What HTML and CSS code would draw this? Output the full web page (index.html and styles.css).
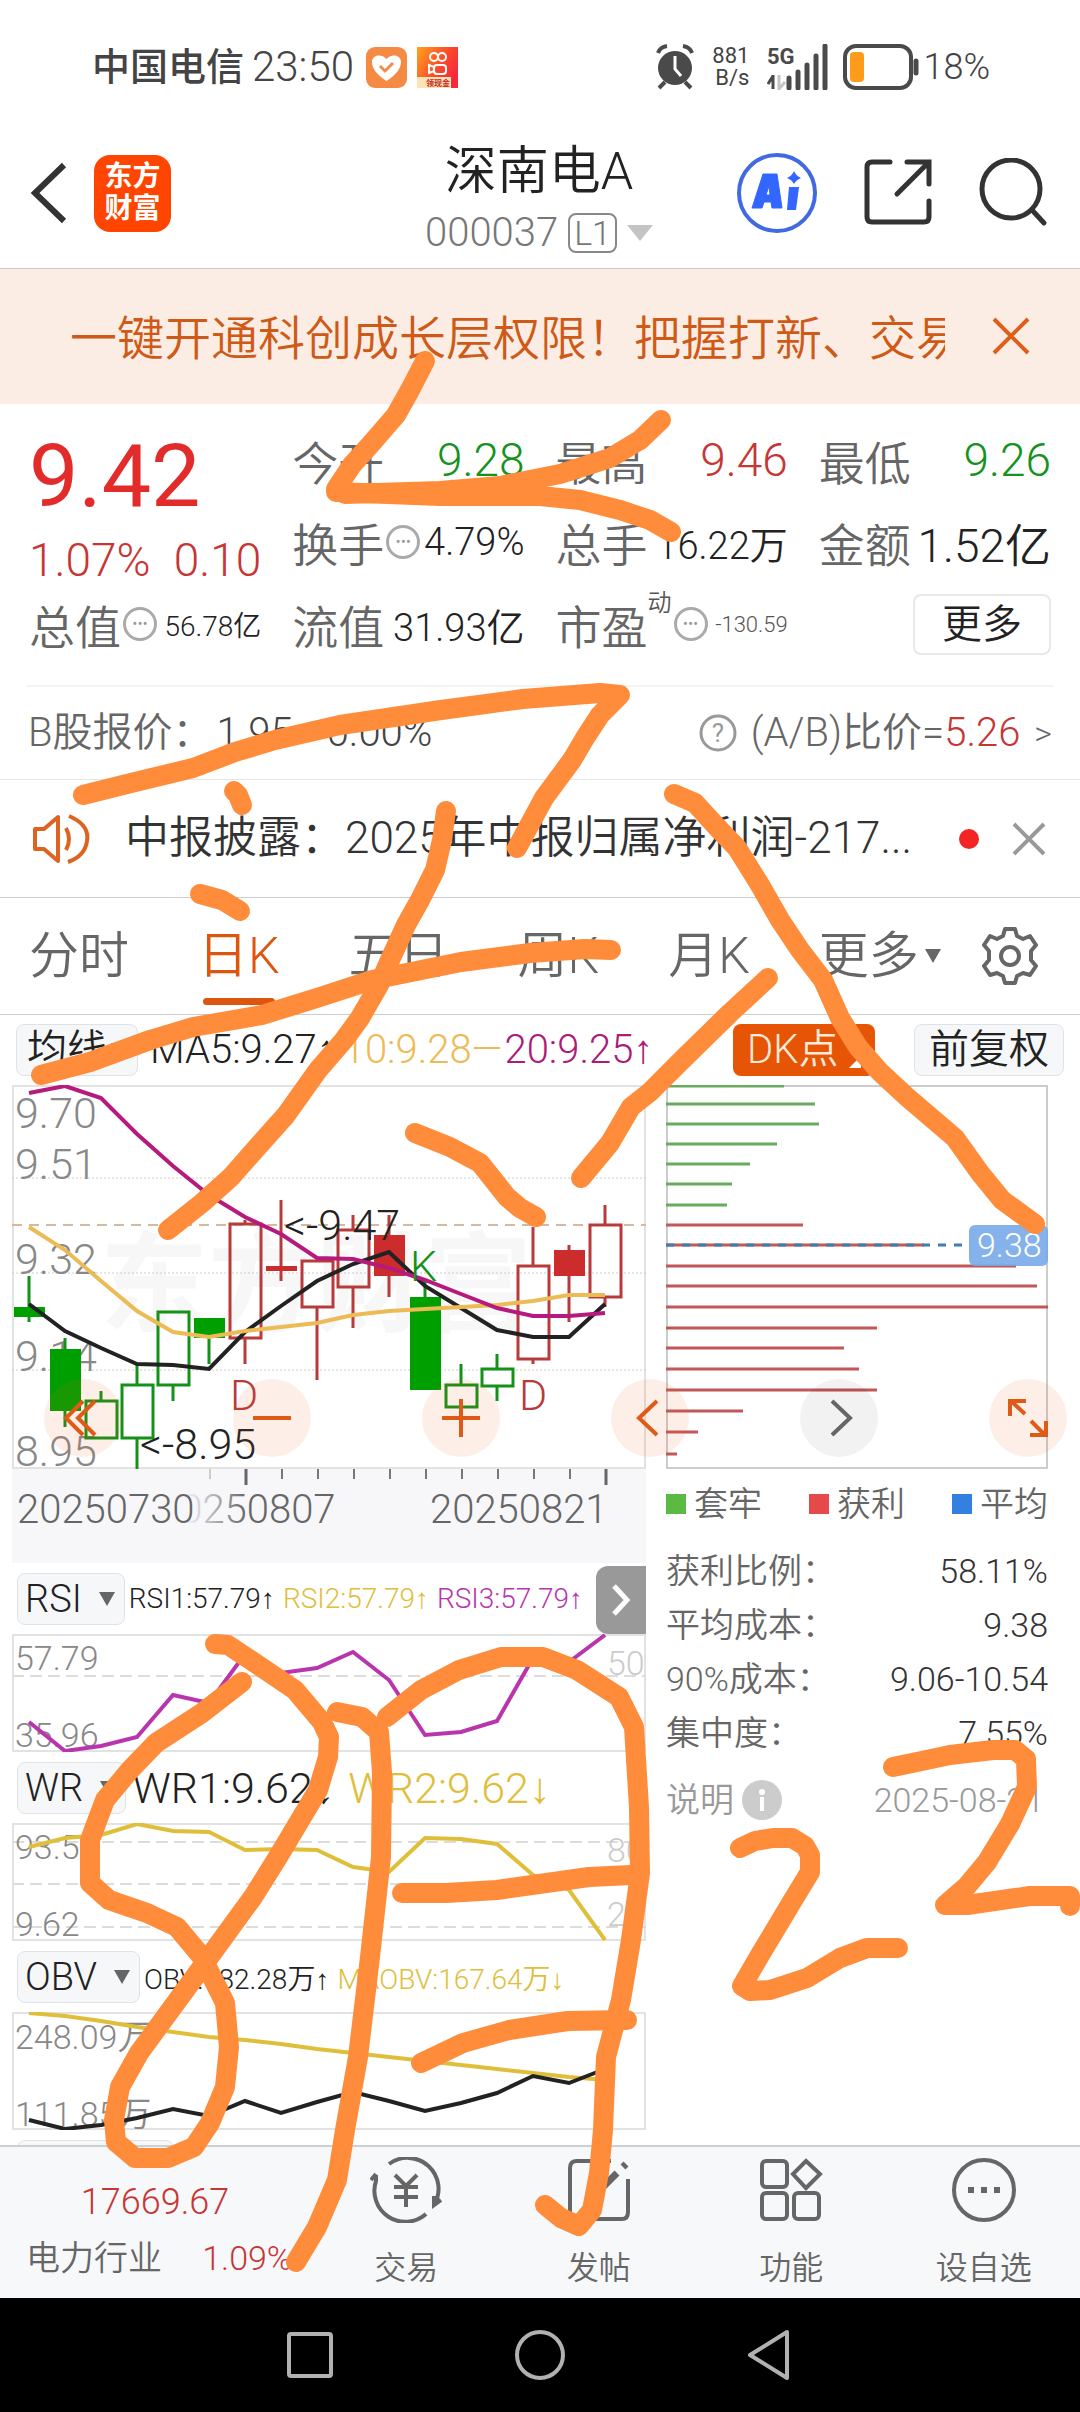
FILE: index.html
```html
<!DOCTYPE html>
<html lang="zh-CN">
<head>
    <meta charset="UTF-8">
    <meta name="viewport" content="width=device-width, initial-scale=1.0">
    <title>深南电A 000037</title>
    <link rel="stylesheet" href="styles.css">
</head>
<body>
    <div class="phone">
        <div class="status-bar">
            <div class="status-left">
                <span class="carrier">中国电信</span>
                <span class="clock">23:50</span>
                <svg class="app-badge" viewBox="0 0 41 41">
                    <rect width="41" height="41" rx="9" fill="#f58a45"/>
                    <path d="M20.500 34 C10 27 6 21 6 15 C6 8 15 6 20.500 12 C26 6 35 8 35 15 C35 21 31 27 20.500 34Z" fill="#fff"/>
                    <path d="M14 19 l5 5 l8 -8" fill="none" stroke="#f58a45" stroke-width="3"/>
                </svg>
                <svg class="app-badge" viewBox="0 0 41 41">
                    <defs>
                        <linearGradient id="kwai" x1="0" y1="0" x2="1" y2="0.600">
                            <stop offset="0" stop-color="#ffa41c"/>
                            <stop offset="0.600" stop-color="#fb4a2c"/>
                            <stop offset="1" stop-color="#f5283c"/>
                        </linearGradient>
                    </defs>
                    <rect width="41" height="41" fill="url(#kwai)"/>
                    <g fill="none" stroke="#fff" stroke-width="2">
                        <circle cx="17" cy="10" r="4"/>
                        <circle cx="25" cy="10" r="4"/>
                        <rect x="17" y="18" width="12" height="9" rx="3"/>
                        <path d="M17 20 l-5 -2 v8 l5 -2"/>
                    </g>
                    <path d="M0 30 H34 V41 H0Z" fill="#ffe3b5"/>
                    <text x="9" y="39" font-size="8" font-weight="700" fill="#c3261b">领现金</text>
                </svg>
            </div>
            <div class="status-right">
                <svg class="alarm" viewBox="0 0 38 46">
                    <circle cx="19" cy="24" r="17" fill="#4a4a4a"/>
                    <path d="M19 12 V25 L25 32" fill="none" stroke="#fff" stroke-width="3"/>
                    <path d="M2 9 Q4 3 11 2 M36 9 Q34 3 27 2 M9 38 L3 44 M29 38 L35 44" fill="none" stroke="#4a4a4a" stroke-width="4"/>
                </svg>
                <div class="net-speed"><span>881</span><span>B/s</span></div>
                <svg class="signal" viewBox="0 0 64 46">
                    <text x="0" y="20" font-size="22" font-weight="700" fill="#4a4a4a">5G</text>
                    <path d="M6 31 V45 M1 40 L6 32" stroke="#4a4a4a" stroke-width="3" fill="none"/>
                    <path d="M12 31 V45 L18 38" stroke="#c4c4c4" stroke-width="3" fill="none"/>
                    <path d="M22 34 V44 M31 28 V44 M40 21 V44 M49 12 V44 M58 2 V44" stroke="#4a4a4a" stroke-width="5" stroke-linecap="round"/>
                </svg>
                <svg class="battery" viewBox="0 0 76 46">
                    <rect x="2" y="2" width="66" height="42" rx="11" fill="none" stroke="#4a4a4a" stroke-width="4"/>
                    <rect x="7" y="8" width="14" height="30" rx="4" fill="#ff9b1b"/>
                    <path d="M73 17 V29" stroke="#4a4a4a" stroke-width="5" stroke-linecap="round"/>
                </svg>
                <span class="percent">18%</span>
            </div>
        </div>

        <header class="header">
            <div class="header-left">
                <button class="icon-btn" aria-label="返回">
                    <svg width="38" height="64" viewBox="0 0 38 64"><path d="M34 4 L5 32 L34 60" fill="none" stroke="#333" stroke-width="6"/></svg>
                </button>
                <a class="logo" href="#"><span>东方</span><span>财富</span></a>
            </div>
            <div class="header-title">
                <h1>深南电A</h1>
                <div class="code-row">
                    <span>000037</span>
                    <span class="level">L1</span>
                    <svg width="26" height="16" viewBox="0 0 26 16"><path d="M0 0 H26 L13 16Z" fill="#c4c4c4"/></svg>
                </div>
            </div>
            <div class="header-right">
                <button class="icon-btn" aria-label="AI 助手">
                    <svg width="82" height="82" viewBox="0 0 82 82">
                        <circle cx="41" cy="41" r="38" fill="none" stroke="#4169e1" stroke-width="4"/>
                        <path d="M27 22 H41 L46 56 H36 L35 50 H28 L26 56 H16Z M33 34 L30 43 H34Z" fill="#3366ff" fill-rule="evenodd" stroke="#3366ff" stroke-width="1" stroke-linejoin="round"/>
                        <path d="M53 35 H63 L60 58 H51Z" fill="#3366ff"/>
                        <path d="M58 19 Q60 24 65 26 Q60 28 58 32 Q56 28 51 26 Q56 24 58 19Z" fill="#3366ff"/>
                    </svg>
                </button>
                <button class="icon-btn" aria-label="分享">
                    <svg width="68" height="68" viewBox="0 0 68 68">
                        <path d="M26 3 H8 Q3 3 3 8 V58 Q3 63 8 63 H60 Q65 63 65 58 V42 M43 3 H65 V25 M64 4 L33 35" fill="none" stroke="#333" stroke-width="5" stroke-linecap="round"/>
                    </svg>
                </button>
                <button class="icon-btn" aria-label="搜索">
                    <svg width="70" height="70" viewBox="0 0 70 70">
                        <circle cx="33" cy="31" r="29" fill="none" stroke="#333" stroke-width="5"/>
                        <path d="M54 52 L66 65" stroke="#333" stroke-width="5" stroke-linecap="round"/>
                    </svg>
                </button>
            </div>
        </header>

        <div class="banner">
            <p>一键开通科创成长层权限！把握打新、交易先机</p>
            <button class="icon-btn" aria-label="关闭">
                <svg width="38" height="38" viewBox="0 0 38 38"><path d="M2 2 L36 36 M36 2 L2 36" stroke="#dd5f1b" stroke-width="4"/></svg>
            </button>
        </div>

        <section class="quote">
            <div class="price-box">
                <div class="price">9.42</div>
                <div class="change"><span>1.07%</span><span>0.10</span></div>
            </div>
            <div class="cell"><span class="label">今开</span><span class="value down">9.28</span></div>
            <div class="cell"><span class="label">最高</span><span class="value up">9.46</span></div>
            <div class="cell"><span class="label">最低</span><span class="value down">9.26</span></div>
            <div class="cell"><span class="label">换手</span><span class="dots">•••</span><span class="value medium">4.79%</span></div>
            <div class="cell"><span class="label">总手</span><span class="value medium">16.22万</span></div>
            <div class="cell"><span class="label">金额</span><span class="value">1.52亿</span></div>
            <div class="cell"><span class="label">总值</span><span class="dots">•••</span><span class="value small">56.78亿</span></div>
            <div class="cell"><span class="label">流值</span><span class="value medium">31.93亿</span></div>
            <div class="cell"><span class="label">市盈</span><sup>动</sup><span class="dots">•••</span><span class="value tiny">-130.59</span></div>
            <div class="cell"><button class="more-btn">更多</button></div>
        </section>

        <div class="b-share">
            <span>B股报价：</span>
            <span class="b-price">1.95</span>
            <span class="b-rate">0.00%</span>
            <a class="ratio" href="#">
                <svg width="38" height="38" viewBox="0 0 38 38">
                    <circle cx="19" cy="19" r="17" fill="none" stroke="#999" stroke-width="3"/>
                    <text x="19" y="28" font-size="26" text-anchor="middle" font-weight="400" fill="#999">?</text>
                </svg>
                <span>(A/B)比价=<em>5.26</em></span>
                <span class="gt">&gt;</span>
            </a>
        </div>

        <div class="notice">
            <svg width="58" height="52" viewBox="0 0 58 52">
                <path d="M3 16 H12 L26 4 V48 L12 36 H3Z M34 15 Q40 26 34 37 M37 3 Q58 12 55 28 Q53 43 36 49" fill="none" stroke="#dd6420" stroke-width="4" stroke-linejoin="round"/>
            </svg>
            <a href="#">中报披露：2025年中报归属净利润-217...</a>
            <span class="dot"></span>
            <button class="icon-btn" aria-label="关闭">
                <svg width="34" height="34" viewBox="0 0 34 34"><path d="M2 2 L32 32 M32 2 L2 32" stroke="#999" stroke-width="4"/></svg>
            </button>
        </div>

        <nav class="tabs">
            <button>分时</button>
            <button class="active">日K</button>
            <button>五日</button>
            <button>周K</button>
            <button>月K</button>
            <button>更多<svg class="tab-caret" width="16" height="14" viewBox="0 0 16 14"><path d="M0 0 H16 L8 14Z" fill="#666"/></svg></button>
            <button class="settings" aria-label="设置">
                <svg width="60" height="60" viewBox="0 0 60 60" fill="none" stroke="#666" stroke-width="4" stroke-linejoin="round">
                    <path d="M25 3 H35 L37 10 L43 13 L50 10 L56 19 L51 25 V34 L56 40 L50 49 L43 47 L37 50 L35 57 H25 L23 50 L17 47 L10 49 L4 40 L9 34 V25 L4 19 L10 10 L17 13 L23 10Z"/>
                    <circle cx="30" cy="30" r="9"/>
                </svg>
            </button>
        </nav>

        <div class="toolbar">
            <button class="tag-btn">均线<svg width="16" height="14" viewBox="0 0 16 14"><path d="M0 0 H16 L8 14Z" fill="#666"/></svg></button>
            <span class="ma5">MA5:9.27↑</span>
            <span class="ma10">10:9.28—</span>
            <span class="ma20">20:9.25↑</span>
            <button class="dk-btn">DK点<svg width="16" height="40" viewBox="0 0 16 40"><path d="M14 26 V38 H2Z" fill="#fff"/></svg></button>
            <button class="tag-btn">前复权</button>
        </div>

        <main class="charts">
            <div class="chart-left">
                <svg class="plot" viewBox="0 0 634 384">
                    <text class="watermark" x="88" y="238">东方财富</text>
                    <rect class="frame" x="1" y="1" width="632" height="382"/>
                    <path class="grid-dot" d="M0 93 H634 M0 188 H634 M0 285 H634"/>
                    <path d="M0 140 H634" stroke="#d9b99b" stroke-width="2" stroke-dasharray="10 7"/>

                    <g class="axis-label">
                        <text x="3" y="43">9.70</text>
                        <text x="3" y="94">9.51</text>
                        <text x="3" y="189">9.32</text>
                        <text x="3" y="286">9.14</text>
                        <text x="3" y="381">8.95</text>
                    </g>

                    <!-- falling days -->
                    <g class="candle-down">
                        <path d="M17 191 V237 M53 253 V342 M89 306 V316 M125 280 V300 M125 353 V384 M161 300 V316 M197 233 V279 M413 196 V305 M449 279 V300 M485 269 V284 M485 301 V316"/>
                        <rect class="solid" x="2" y="222" width="31" height="10"/>
                        <rect class="solid" x="38" y="264" width="31" height="62"/>
                        <rect x="74" y="316" width="31" height="37"/>
                        <rect x="110" y="300" width="31" height="53"/>
                        <rect x="146" y="227" width="31" height="73"/>
                        <rect class="solid" x="182" y="233" width="31" height="20"/>
                        <rect class="solid" x="398" y="212" width="31" height="93"/>
                        <rect x="434" y="300" width="31" height="22"/>
                        <rect x="470" y="284" width="31" height="17"/>
                    </g>
                    <!-- rising days -->
                    <g class="candle-up">
                        <path d="M233 135 V139 M233 253 V279 M269 115 V196 M305 222 V295 M341 130 V145 M341 202 V243 M377 130 V212 M521 142 V181 M521 274 V279 M557 160 V237 M593 120 V140 M593 212 V222"/>
                        <rect x="218" y="139" width="31" height="114"/>
                        <rect class="solid" x="254" y="181" width="31" height="5"/>
                        <rect x="290" y="176" width="31" height="46"/>
                        <rect x="326" y="145" width="31" height="57"/>
                        <rect class="solid" x="362" y="150" width="31" height="41"/>
                        <rect x="506" y="181" width="31" height="93"/>
                        <rect class="solid" x="542" y="165" width="31" height="26"/>
                        <rect x="578" y="140" width="31" height="72"/>
                    </g>

                    <polyline class="line black" points="17,219 53,246 89,263 125,279 161,280 197,284 233,247 269,221 305,196 341,179 377,167 413,201 449,223 485,245 521,252 557,252 593,219"/>
                    <polyline class="line amber" points="17,142 53,165 89,196 125,226 161,247 197,252 233,246 269,242 305,238 341,230 377,226 413,224 449,222 485,220 521,216 557,210 593,210"/>
                    <polyline class="line magenta" points="17,8 53,1 89,13 125,49 161,81 197,110 233,132 269,149 305,173 341,174 377,183 413,195 449,209 485,223 521,231 557,231 593,228"/>

                    <g class="marker">
                        <text x="272" y="155">&lt;-9.47</text>
                        <text x="128" y="374">&lt;-8.95</text>
                        <text class="sell" x="398" y="196">K</text>
                        <text class="buy" x="218" y="325">D</text>
                        <text class="buy" x="507" y="325">D</text>
                    </g>
                </svg>

                <svg class="plot axis" viewBox="0 0 634 94">
                    <defs>
                        <linearGradient id="fade" x1="0" x2="1">
                            <stop offset="0.150" stop-color="#666" stop-opacity="0"/>
                            <stop offset="0.500" stop-color="#666"/>
                        </linearGradient>
                    </defs>
                    <path d="M198 0 V10" stroke="#ccc" stroke-width="2"/>
                    <path d="M270 0 V10 M306 0 V10 M342 0 V10 M378 0 V10 M414 0 V10 M450 0 V10 M486 0 V10 M522 0 V10 M558 0 V10" stroke="#777" stroke-width="2"/>
                    <path d="M234 0 V16 M594 0 V16" stroke="#666" stroke-width="3"/>
                    <text x="5" y="54">20250730</text>
                    <text x="146" y="54" fill="url(#fade)">20250807</text>
                    <text x="418" y="54">20250821</text>
                </svg>

                <div class="pane-head">
                    <button class="tag-btn">RSI<svg width="16" height="14" viewBox="0 0 16 14"><path d="M0 0 H16 L8 14Z" fill="#666"/></svg></button>
                    <div class="readings small">
                        <span>RSI1:57.79↑</span><span class="gold">RSI2:57.79↑</span><span class="violet">RSI3:57.79↑</span>
                    </div>
                    <button class="next-btn" aria-label="展开">
                        <svg width="20" height="34" viewBox="0 0 20 34"><path d="M3 3 L16 17 L3 31" fill="none" stroke="#fff" stroke-width="5"/></svg>
                    </button>
                </div>
                <svg class="plot" viewBox="0 0 634 118">
                    <rect class="frame" x="1" y="1" width="632" height="116"/>
                    <path class="grid-dash" d="M0 42 H634"/>
                    <g class="pane-label">
                        <text x="3" y="36">57.79</text>
                        <text x="3" y="113">35.96</text>
                        <text class="pale" x="595" y="41">50.00</text>
                    </g>
                    <polyline class="line violet-line" points="17,88 53,117 89,112 125,103 161,61 197,69 233,20 269,39 305,34 341,18 377,46 413,101 449,98 485,87 521,24 557,28 593,1"/>
                </svg>

                <div class="pane-head">
                    <button class="tag-btn">WR<svg width="16" height="14" viewBox="0 0 16 14"><path d="M0 0 H16 L8 14Z" fill="#666"/></svg></button>
                    <div class="readings">
                        <span>WR1:9.62↓</span><span class="gold">WR2:9.62↓</span>
                    </div>
                </div>
                <svg class="plot" viewBox="0 0 634 118">
                    <rect class="frame" x="1" y="1" width="632" height="116"/>
                    <path class="grid-dash" d="M0 19 H634 M0 61 H634 M0 104 H634"/>
                    <g class="pane-label">
                        <text x="3" y="36">93.50</text>
                        <text x="3" y="113">9.62</text>
                        <text class="pale" x="595" y="39">80.00</text>
                        <text class="pale" x="595" y="103">20.00</text>
                    </g>
                    <polyline class="line gold-line" points="17,24 53,15 89,12 125,1 161,8 197,9 233,27 269,26 305,27 341,44 377,49 413,15 449,16 485,21 521,52 557,67 593,117"/>
                </svg>

                <div class="pane-head">
                    <button class="tag-btn">OBV<svg width="16" height="14" viewBox="0 0 16 14"><path d="M0 0 H16 L8 14Z" fill="#666"/></svg></button>
                    <div class="readings small">
                        <span>OBV:182.28万↑</span><span class="gold">MAOBV:167.64万↓</span>
                    </div>
                </div>
                <svg class="plot" viewBox="0 0 634 118">
                    <rect class="frame" x="1" y="1" width="632" height="116"/>
                    <g class="pane-label">
                        <text x="3" y="37">248.09万</text>
                        <text x="3" y="114">111.85万</text>
                    </g>
                    <polyline class="line gold-line" points="17,1 53,4 89,9 125,15 161,20 197,25 233,28 269,32 305,37 341,41 377,45 413,49 449,53 485,57 521,61 557,65 593,68"/>
                    <polyline class="line black" points="17,108 53,117 89,113 125,106 161,97 197,104 233,89 269,101 305,90 341,80 377,89 413,99 449,91 485,81 521,64 557,71 593,57"/>
                </svg>
                <div class="pane-head cut">
                    <button class="tag-btn">MACD<svg width="16" height="14" viewBox="0 0 16 14"><path d="M0 0 H16 L8 14Z" fill="#666"/></svg></button>
                </div>
            </div>

            <div class="chart-right">
                <svg class="plot" viewBox="0 0 382 384">
                    <rect x="1" y="1" width="380" height="382" fill="none" stroke="#ccc" stroke-width="2"/>
                    <g class="chips">
                        <path class="trapped" d="M0 1 H118 M0 19 H149 M0 39 H153 M0 59 H111 M0 79 H84 M0 99 H66 M0 120 H61"/>
                        <path class="profit" d="M0 140 H137 M0 160 H258 M0 181 H350 M0 201 H371 M0 222 H382 M0 243 H211 M0 263 H178 M0 284 H193 M0 305 H211 M0 326 H77 M0 347 H32 M0 369 H11"/>
                        <path class="average" d="M0 160 H296"/>
                    </g>
                    <rect x="303" y="140" width="79" height="41" rx="6" fill="#78aae8" fill-opacity="0.900"/>
                    <text x="311" y="172" font-size="34" fill="#fff">9.38</text>
                </svg>
                <div class="legend">
                    <span><i class="green"></i>套牢</span>
                    <span><i class="red"></i>获利</span>
                    <span><i class="blue"></i>平均</span>
                </div>
                <dl class="chip-data">
                    <div><dt>获利比例：</dt><dd>58.11%</dd></div>
                    <div><dt>平均成本：</dt><dd>9.38</dd></div>
                    <div><dt>90%成本：</dt><dd>9.06-10.54</dd></div>
                    <div><dt>集中度：</dt><dd>7.55%</dd></div>
                </dl>
                <div class="chip-foot">
                    <span>说明</span>
                    <svg width="40" height="40" viewBox="0 0 40 40">
                        <circle cx="20" cy="20" r="20" fill="#ccc"/>
                        <circle cx="20" cy="12" r="3" fill="#fff"/>
                        <path d="M20 17 V31" stroke="#fff" stroke-width="4"/>
                    </svg>
                    <span class="chip-date">2025-08-21</span>
                </div>
            </div>

            <div class="controls">
                <button aria-label="最早"><svg viewBox="0 0 78 78"><path d="M39 22 L22 39 L39 56 M51 22 L34 39 L51 56"/></svg></button>
                <button aria-label="缩小"><svg viewBox="0 0 78 78"><path d="M20 39 H58"/></svg></button>
                <button aria-label="放大"><svg viewBox="0 0 78 78"><path d="M20 39 H58 M39 20 V58"/></svg></button>
                <button aria-label="左移"><svg viewBox="0 0 78 78"><path d="M46 22 L28 39 L46 56"/></svg></button>
                <button class="gray" aria-label="右移"><svg viewBox="0 0 78 78"><path d="M32 22 L50 39 L32 56"/></svg></button>
                <button aria-label="全屏"><svg viewBox="0 0 78 78"><path d="M21 37 V22 H37 M22 22 L36 35 M57 42 V56 H41 M42 42 L56 56"/></svg></button>
            </div>
        </main>

        <footer class="bottom-bar">
            <a class="sector" href="#">
                <span class="index">17669.67</span>
                <span class="sector-row"><span>电力行业</span><span class="rate">1.09%</span></span>
            </a>
            <button>
                <svg viewBox="0 0 72 66">
                    <path d="M19 7 A31 31 0 0 1 64 48 M56 57 A31 31 0 0 1 6 24 V18 M1 23 L6 17 M64 39 V48 L71 43"/>
                    <path d="M25 18 L36 29 L47 18 M36 29 V50 M24 30 H48 M24 40 H48"/>
                </svg>
                交易
            </button>
            <button>
                <svg viewBox="0 0 72 66">
                    <path d="M48 4 H14 Q7 4 7 11 V55 Q7 62 14 62 H59 Q65 62 65 55 V22"/>
                    <path d="M34 36 L54 16 M60 10 L63 7" stroke-width="7"/>
                </svg>
                发帖
            </button>
            <button>
                <svg viewBox="0 0 72 66">
                    <rect x="7" y="4" width="25" height="26" rx="4"/>
                    <rect x="7" y="36" width="25" height="26" rx="4"/>
                    <rect x="39" y="36" width="25" height="26" rx="4"/>
                    <path d="M51 4 L65 17 L51 31 L38 17Z"/>
                </svg>
                功能
            </button>
            <button>
                <svg viewBox="0 0 72 66">
                    <circle cx="36" cy="33" r="30"/>
                    <path d="M20 33 H26 M33 33 H39 M46 33 H52" stroke-width="6"/>
                </svg>
                设自选
            </button>
        </footer>

        <div class="nav-bar">
            <button aria-label="最近任务"><svg viewBox="0 0 52 52"><rect x="5" y="5" width="42" height="42" rx="2"/></svg></button>
            <button aria-label="主页"><svg viewBox="0 0 52 52"><circle cx="26" cy="26" r="23"/></svg></button>
            <button aria-label="返回"><svg viewBox="0 0 52 52"><path d="M43 3 V49 L6 26Z"/></svg></button>
        </div>

        <!-- handwritten note over the whole screen -->
        <svg class="ink" viewBox="0 0 1080 2412">
            <polyline points="425,361 410,390 396,415 370,445 352,465 336,489"/>
            <polyline points="336,492 440,496 540,496 580,500 620,510 650,520 671,532"/>
            <polyline points="661,420 640,440 610,458 560,474 500,486 440,491 345,494"/>
            <polyline points="83,795 131,783 193,768 235,752 275,740 340,725 441,710 523,699 600,693 620,695 600,715 585,738 572,760 544,798 517,848"/>
            <polyline points="234,791 238,795 242,805"/>
            <polyline points="200,894 222,900 240,911"/>
            <polyline points="41,1075 90,1062 150,1040 193,1027 262,1015 320,997 372,980 461,962 530,953 585,949 611,950"/>
            <polyline points="446,811 442,840 435,870 420,900 406,925 390,960 379,985 360,1018 344,1040 318,1070 286,1115 253,1152 231,1177 202,1203 168,1230"/>
            <polyline points="674,794 695,803 715,825 737,848 760,885 780,920 800,950 823,980 840,1018 858,1047 880,1072 907,1097 955,1138 980,1173 1002,1200 1035,1224"/>
            <polyline points="768,978 730,1013 682,1060 650,1092 631,1107 610,1143 581,1178"/>
            <polyline points="415,1133 450,1147 480,1163 507,1197 520,1208 536,1217"/>
            <polyline points="215,1644 228,1645 261,1667 295,1690 322,1722 329,1737 328,1757 318,1790 278,1857 253,1897 202,1967 139,2053 120,2087 114,2120 116,2142 135,2158 168,2158 194,2147 210,2123 225,2087 229,2047 225,2003 202,1957 177,1927 147,1913 109,1900 90,1883 90,1840 105,1800 130,1770 156,1743 202,1713 242,1682"/>
            <polyline points="337,1712 362,1717 379,1732 382,1773 381,1857 370,1957 358,2057 345,2130 337,2180 317,2227 296,2262"/>
            <polyline points="387,1717 421,1690 459,1670 501,1657 543,1657 577,1670 619,1697 634,1727 639,1807 640,1873 631,1940 621,2000 606,2057 603,2130 599,2173 592,2210 579,2226 561,2218 545,2205"/>
            <polyline points="402,1893 446,1893 497,1890 589,1877 631,1875"/>
            <polyline points="421,2063 463,2043 509,2030 568,2021 627,2020"/>
            <polyline points="740,1848 755,1841 773,1838 792,1838 805,1846 810,1855 810,1872 793,1900 760,1955 742,1986 750,1991 770,1990 807,1978 840,1958 867,1948 898,1948"/>
            <polyline points="893,1767 917,1762 950,1755 993,1750 1015,1750 1026,1759 1027,1787 1010,1824 987,1862 967,1886 945,1905 967,1905 1030,1896 1070,1896 1070,1906"/>
        </svg>
    </div>
</body>
</html>
```

FILE: styles.css
```css
* {
    box-sizing: border-box;
}

body {
    margin: 0;
    background-color: #fff;
    color: #333;
    font-family: Roboto, "Liberation Sans", "Noto Sans CJK SC", sans-serif;
    font-weight: 350;
}

h1, p, dl, dd {
    margin: 0;
}

button {
    margin: 0;
    padding: 0;
    border: none;
    background: none;
    color: inherit;
    font: inherit;
    cursor: pointer;
}

a {
    color: inherit;
    text-decoration: none;
}

svg {
    display: block;
    flex-shrink: 0;
}

.phone {
    position: relative;
    overflow: hidden;
}

.icon-btn {
    display: block;
}

/* status bar */
.status-bar {
    display: flex;
    justify-content: space-between;
    padding: 44px 90px 28px 92px;
    line-height: 46px;
    font-size: 42px;
    color: #444;
}

.status-left,
.status-right {
    display: flex;
    align-items: center;
}

.carrier {
    font-size: 38px;
    font-weight: 500;
}

.clock {
    margin: 0 12px 0 8px;
}

.app-badge {
    width: 41px;
    height: 41px;
    margin-right: 10px;
}

.alarm {
    width: 38px;
    margin-right: 18px;
}

.net-speed {
    display: flex;
    flex-direction: column;
    align-items: flex-end;
    margin-right: 18px;
    font-size: 22px;
    font-weight: 400;
    line-height: 22px;
}

.signal {
    width: 64px;
    margin-right: 12px;
}

.battery {
    width: 76px;
    margin-right: 4px;
}

.percent {
    font-size: 36px;
}

/* header */
.header {
    display: grid;
    grid-template-columns: 1fr auto 1fr;
    align-items: center;
    min-height: 151px;
    padding: 0 32px 0 30px;
    border-bottom: 1px solid #ccc;
}

.header-left,
.header-right {
    display: flex;
    align-items: center;
    gap: 26px;
}

.header-right {
    justify-content: flex-end;
    gap: 46px;
}

.logo {
    display: flex;
    flex-direction: column;
    justify-content: center;
    align-items: center;
    width: 77px;
    height: 77px;
    border-radius: 16px;
    background-color: #ff4500;
    color: #fff;
    font-size: 28px;
    font-weight: 700;
    line-height: 32px;
}

.header-title {
    padding-top: 20px;
    text-align: center;
}

.header-title h1 {
    font-size: 52px;
    font-weight: 350;
    line-height: 60px;
    color: #222;
}

.code-row {
    display: flex;
    justify-content: center;
    align-items: center;
    gap: 10px;
    font-size: 40px;
    line-height: 62px;
    color: #777;
}

.level {
    padding: 0 4px;
    border: 2px solid #888;
    border-radius: 8px;
    font-size: 34px;
    line-height: 36px;
}

/* banner */
.banner {
    display: flex;
    align-items: center;
    justify-content: space-between;
    padding: 32px 50px 33px 70px;
    background-color: #fcede4;
    color: #cf5a17;
    font-size: 47px;
    line-height: 64px;
}

.banner p {
    flex: 1;
    margin-right: 47px;
    padding-top: 6px;
    overflow: hidden;
    white-space: nowrap;
}

/* quote */
.quote {
    display: grid;
    grid-template-columns: repeat(4, 1fr);
    grid-auto-rows: 82px;
    column-gap: 31px;
    margin: 0 27px;
    padding: 15px 2px 20px;
    border-bottom: 2px solid #f3f3f3;
}

.price-box {
    grid-row: span 2;
    color: #c73535;
}

.price {
    color: #e22c2c;
    font-size: 88px;
    font-weight: 400;
    line-height: 114px;
}

.change {
    display: flex;
    justify-content: space-between;
    font-size: 46px;
    line-height: 54px;
}

.cell {
    display: flex;
    align-items: center;
    min-width: 0;
    white-space: nowrap;
}

.cell sup {
    align-self: flex-start;
    font-size: 24px;
    line-height: 40px;
    color: #555;
}

.label {
    color: #666;
    font-size: 46px;
}

.value {
    margin-left: auto;
    font-size: 46px;
    color: #222;
}

.value.medium {
    font-size: 38px;
}

.value.small {
    font-size: 28px;
}

.value.tiny {
    font-size: 22px;
    color: #555;
}

.value.up {
    color: #c73535;
}

.value.down {
    color: #159220;
}

.dots {
    width: 34px;
    height: 34px;
    margin-left: 2px;
    border: 3px solid #aaa;
    border-radius: 50%;
    color: #999;
    font-size: 16px;
    line-height: 28px;
    text-align: center;
}

.more-btn {
    width: 138px;
    margin-left: auto;
    border: 2px solid #e8e8e8;
    border-radius: 8px;
    color: #222;
    font-size: 40px;
    line-height: 57px;
}

/* B share row */
.b-share {
    display: flex;
    align-items: center;
    padding: 0 28px;
    border-bottom: 1px solid #e6e6e6;
    color: #666;
    font-size: 40px;
    line-height: 92px;
}

.b-price {
    margin-left: 4px;
    color: #444;
}

.b-rate {
    margin-left: 34px;
    color: #444;
}

.ratio {
    display: flex;
    align-items: center;
    gap: 14px;
    margin-left: auto;
}

.ratio em {
    color: #c73535;
    font-style: normal;
}

.gt {
    font-size: 34px;
}

/* notice */
.notice {
    display: flex;
    align-items: center;
    padding: 0 34px 0 32px;
    border-bottom: 1px solid #ccc;
    font-size: 44px;
    line-height: 117px;
}

.notice a {
    flex: 1;
    margin-left: 35px;
    white-space: nowrap;
}

.dot {
    width: 20px;
    height: 20px;
    margin-right: 33px;
    border-radius: 50%;
    background-color: #f22424;
}

/* tabs */
.tabs {
    display: flex;
    align-items: center;
    gap: 69px;
    padding: 0 40px 0 29px;
    border-bottom: 1px solid #ccc;
    color: #666;
    font-size: 50px;
    line-height: 116px;
}

.tabs button {
    position: relative;
    display: flex;
    align-items: center;
}

.tabs .settings {
    margin-left: auto;
}

.tabs .active {
    color: #dd5610;
}

.tabs .active::after {
    content: "";
    position: absolute;
    left: 5px;
    right: 5px;
    bottom: 9px;
    height: 7px;
    border-radius: 4px;
    background-color: #dd5610;
}

.tab-caret {
    margin-left: 6px;
}

.tabs button:nth-child(6) {
    margin-right: -30px;
}

/* average line toolbar */
.toolbar {
    display: flex;
    align-items: center;
    padding: 9px 16px;
    font-size: 40px;
    line-height: 52px;
    white-space: nowrap;
}

.tag-btn {
    display: flex;
    align-items: center;
    gap: 17px;
    padding: 0 9px 0 7px;
    border: 1px solid #dfe3e8;
    border-radius: 8px;
    background-color: #f6f7f9;
    color: #222;
    font-size: 38px;
    line-height: 50px;
}

.toolbar .tag-btn {
    gap: 4px;
    padding: 0 10px;
    font-size: 40px;
}

.toolbar .tag-btn:last-child {
    padding: 0 14px;
}

.ma5 {
    margin-left: 12px;
    color: #222;
}

.ma10 {
    margin-left: 6px;
    color: #edbb55;
}

.ma20 {
    margin-left: 2px;
    color: #ad1b79;
}

.dk-btn {
    display: flex;
    align-items: center;
    justify-content: space-between;
    width: 142px;
    margin: 0 39px 0 auto;
    padding: 0 12px 0 14px;
    border-radius: 8px;
    background-color: #e65405;
    color: #ffe9d8;
    font-size: 40px;
}

/* charts */
.charts {
    position: relative;
    display: grid;
    grid-template-columns: 634fr 382fr;
    column-gap: 20px;
    padding: 0 32px 0 12px;
}

.plot {
    width: 100%;
    height: auto;
}

.frame {
    fill: none;
    stroke: #e2e2e2;
    stroke-width: 2;
}

.grid-dot {
    stroke: #ccc;
    stroke-width: 1;
    stroke-dasharray: 2 2;
}

.grid-dash {
    stroke: #dcdcdc;
    stroke-width: 2;
    stroke-dasharray: 12 6;
}

.watermark {
    fill: #f7f7f7;
    font-size: 108px;
    font-weight: 700;
}

.axis-label {
    fill: #888;
    font-size: 43px;
}

.pane-label {
    fill: #888;
    font-size: 34px;
}

.pane-label .pale {
    fill: #ccc;
}

.candle-down,
.candle-up {
    fill: none;
    stroke: #149118;
    stroke-width: 3;
}

.candle-up {
    stroke: #b83a3a;
}

.candle-down .solid {
    fill: #009f00;
    stroke: none;
}

.candle-up .solid {
    fill: #cc2c2c;
    stroke: none;
}

.line {
    fill: none;
    stroke-width: 4;
}

.black {
    stroke: #222;
}

.amber {
    stroke: #edbb55;
}

.magenta {
    stroke: #b51a7c;
}

.violet-line {
    stroke: #b935ae;
}

.gold-line {
    stroke: #dfbf3a;
}

.marker {
    fill: #222;
    font-size: 43px;
}

.marker .sell {
    fill: #149118;
}

.marker .buy {
    fill: #b83a3a;
}

.axis {
    background-color: #f7f7fa;
    fill: #666;
    font-size: 40px;
}

.chips path {
    stroke-width: 3;
}

.chips .trapped {
    stroke: #69ab5c;
}

.chips .profit {
    stroke: #c25757;
}

.chips .average {
    stroke: #3f7dba;
    stroke-dasharray: 8 8;
}

.pane-head {
    display: flex;
    align-items: center;
    min-height: 71px;
    padding-left: 5px;
}

.pane-head.cut {
    align-items: flex-start;
    min-height: 0;
    height: 15px;
    padding-top: 10px;
    overflow: hidden;
}

.readings {
    display: flex;
    gap: 14px;
    margin-left: 6px;
    font-size: 43px;
    color: #222;
    white-space: nowrap;
}

.readings.small {
    gap: 8px;
    margin-left: 4px;
    font-size: 28px;
}

.readings .gold {
    color: #e0be3c;
}

.readings .violet {
    color: #b935ae;
}

.next-btn {
    display: flex;
    align-items: center;
    justify-content: center;
    align-self: flex-end;
    width: 50px;
    height: 68px;
    margin-left: auto;
    border-radius: 12px 0 0 12px;
    background-color: #999;
}

.legend {
    display: flex;
    justify-content: space-between;
    padding-top: 8px;
    color: #666;
    font-size: 34px;
    line-height: 54px;
}

.legend span {
    display: flex;
    align-items: center;
    gap: 8px;
}

.legend i {
    width: 20px;
    height: 20px;
}

.legend .green {
    background-color: #5bb944;
}

.legend .red {
    background-color: #e54949;
}

.legend .blue {
    background-color: #3480e0;
}

.chip-data {
    padding-top: 13px;
    font-size: 34px;
    line-height: 54px;
}

.chip-data div {
    display: flex;
    justify-content: space-between;
}

.chip-data dt {
    color: #666;
}

.chip-foot {
    display: flex;
    align-items: center;
    gap: 8px;
    padding: 13px 4px 0 0;
    color: #999;
    font-size: 34px;
    line-height: 54px;
}

.chip-date {
    margin-left: auto;
}

/* round buttons floating over the plots */
.controls {
    position: absolute;
    top: 294px;
    left: 44px;
    right: 13px;
    display: flex;
    justify-content: space-between;
}

.controls button {
    width: 78px;
    height: 78px;
    border-radius: 50%;
    background-color: rgba(240, 100, 30, 0.1);
}

.controls svg {
    fill: none;
    stroke: #dd5b16;
    stroke-width: 4;
}

.controls .gray {
    background-color: rgba(0, 0, 0, 0.05);
}

.controls .gray svg {
    stroke: #666;
}

/* bottom bar */
.bottom-bar {
    display: flex;
    min-height: 153px;
    border-top: 2px solid #ccd0d2;
    background-color: #f7f8fa;
    color: #666;
    font-size: 32px;
    line-height: 56px;
}

.bottom-bar button {
    flex: 1;
    display: flex;
    flex-direction: column;
    align-items: center;
    padding-top: 10px;
}

.bottom-bar button svg {
    width: 72px;
    height: 66px;
    margin-bottom: 17px;
    fill: none;
    stroke: #666;
    stroke-width: 4;
}

.sector {
    display: flex;
    flex-direction: column;
    align-items: center;
    width: 310px;
    padding-top: 27px;
    font-size: 34px;
}

.index {
    color: #c73535;
    font-size: 36px;
}

.sector-row {
    display: flex;
    justify-content: space-between;
    align-self: stretch;
    padding: 0 18px 0 26px;
}

.rate {
    color: #c73535;
}

/* system navigation */
.nav-bar {
    display: flex;
    justify-content: center;
    gap: 178px;
    padding: 31px 0;
    background-color: #000;
}

.nav-bar svg {
    width: 52px;
    height: 52px;
    fill: none;
    stroke: #b1b1b1;
    stroke-width: 4;
    stroke-linejoin: round;
}

.ink {
    position: absolute;
    top: 0;
    left: 0;
    width: 100%;
    height: auto;
    fill: none;
    stroke: #ff8c3a;
    stroke-width: 20;
    stroke-linecap: round;
    stroke-linejoin: round;
    pointer-events: none;
}
```
